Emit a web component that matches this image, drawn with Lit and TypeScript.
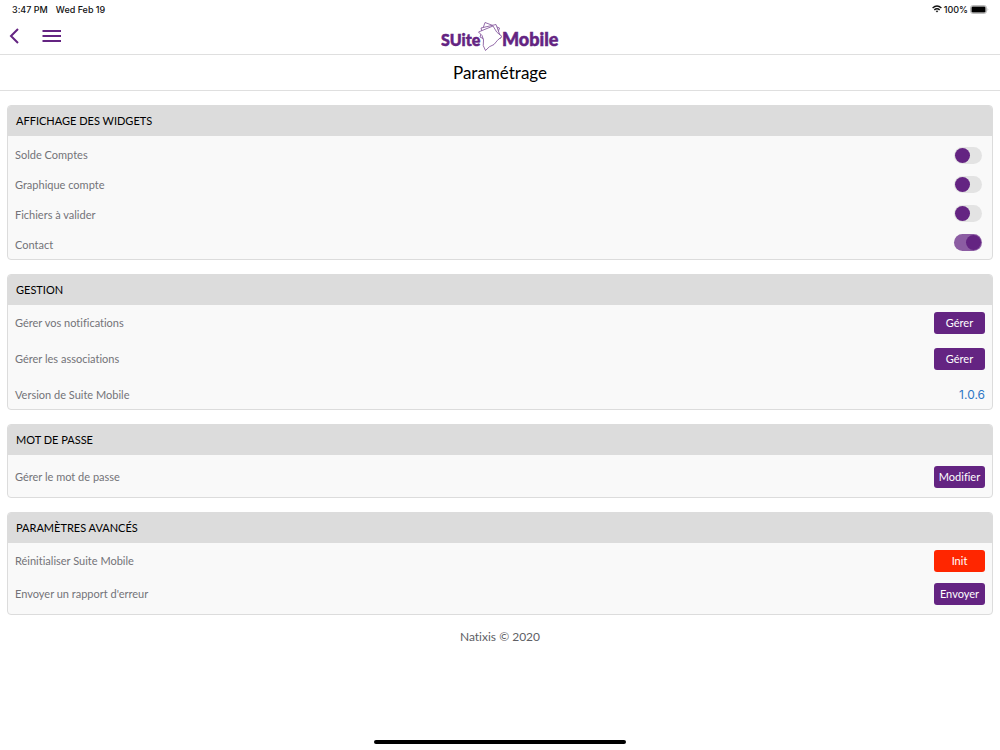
import { LitElement, html, css, svg } from "lit";
import { customElement, property, state } from "lit/decorators.js";

@customElement("settings-panel")
class SettingsPanel extends LitElement {
  @property() heading = "";

  static styles = css`
    :host {
      display: block;
      border: 1px solid #dcdcdc;
      border-radius: 4px;
      background: #f9f9f9;
      overflow: hidden;
    }
    .heading {
      margin: 0;
      padding: 0 8px;
      background: #dcdcdc;
      color: #000;
      font-size: 11px;
      font-weight: 400;
      line-height: 30px;
    }
  `;

  render() {
    return html`
      <h2 class="heading">${this.heading}</h2>
      <slot></slot>
    `;
  }
}

@customElement("app-root")
class AppRoot extends LitElement {
  @state() private widgets = [
    { id: "solde", label: "Solde Comptes", on: false },
    { id: "graphique", label: "Graphique compte", on: false },
    { id: "fichiers", label: "Fichiers à valider", on: false },
    { id: "contact", label: "Contact", on: true },
  ];

  static styles = css`
    :host {
      display: flex;
      flex-direction: column;
      min-height: 100vh;
      background: #fff;
      color: #737378;
      font-family: "Gill Sans", "Lato", sans-serif;
      font-size: 11px;
      font-variant-ligatures: none;
    }
    .status {
      display: flex;
      justify-content: space-between;
      align-items: center;
      height: 18px;
      padding: 0 11px 0 12px;
      color: #111;
      font-family: "Inter", sans-serif;
      font-size: 9px;
      font-weight: 500;
    }
    .status-group {
      display: flex;
      align-items: center;
      gap: 8px;
    }
    .signals {
      gap: 2px;
    }
    .bar {
      display: grid;
      grid-template-columns: 1fr auto 1fr;
      align-items: center;
      height: 36px;
      border-bottom: 1px solid #dfdfdf;
    }
    .nav {
      display: flex;
      gap: 20px;
      padding-left: 8px;
    }
    .icon-button {
      display: block;
      padding: 0;
      border: 0;
      background: none;
      cursor: pointer;
    }
    .icon-button svg,
    .logo,
    .signals svg {
      display: block;
    }
    .logo-text {
      font-family: "Lato", sans-serif;
      font-weight: 900;
      fill: #642482;
      stroke: #642482;
      stroke-width: 0.5px;
    }
    .title {
      margin: 0;
      border-bottom: 1px solid #dfdfdf;
      color: #000;
      font-size: 17px;
      font-weight: 400;
      line-height: 35px;
      text-align: center;
    }
    .panels {
      display: grid;
      gap: 14px;
      padding: 14px 7px 0;
    }
    .widgets {
      display: flex;
      justify-content: space-between;
      padding: 3px 10px 0 7px;
    }
    .labels {
      display: grid;
      grid-auto-rows: 30px;
      align-items: center;
    }
    .switches {
      display: grid;
      grid-auto-rows: 29px;
      align-items: center;
      align-content: center;
    }
    .switch {
      appearance: none;
      display: grid;
      align-items: center;
      box-sizing: border-box;
      width: 28px;
      height: 17px;
      margin: 0;
      padding: 0 1px;
      border-radius: 9px;
      background: #e3e3e3;
      cursor: pointer;
    }
    .switch::before {
      content: "";
      width: 15px;
      height: 15px;
      border-radius: 50%;
      background: #642482;
    }
    .switch:checked {
      background: #8c5da3;
      justify-items: end;
    }
    .rows {
      display: grid;
      padding: 7px 7px 3px;
      gap: 14px;
    }
    .rows.single {
      padding: 11px 7px 9px;
    }
    .rows.tight {
      padding: 7px 7px 9px;
      gap: 11px;
    }
    .row {
      display: flex;
      justify-content: space-between;
      align-items: center;
      height: 22px;
    }
    .row span {
      padding-bottom: 2px;
    }
    .button {
      width: 51px;
      height: 22px;
      padding: 0 0 2px;
      border: 0;
      border-radius: 3px;
      background: #642482;
      color: #fff;
      font: inherit;
      cursor: pointer;
    }
    .button.danger {
      background: #ff2600;
    }
    .version {
      color: #2d77c5;
      font-family: "Inter", sans-serif;
      font-size: 12px;
    }
    .footer {
      padding-top: 14px;
      color: #606065;
      font-size: 12px;
      line-height: 16px;
      text-align: center;
    }
    .home {
      width: 25.2%;
      height: 4px;
      margin: auto auto 6px;
      border-radius: 2px;
      background: #000;
    }
  `;

  private toggle(id: string) {
    this.widgets = this.widgets.map((w) => (w.id === id ? { ...w, on: !w.on } : w));
  }

  private actionRow(id: string, label: string, action: string, kind = "") {
    return html`
      <div class="row">
        <span id=${id}>${label}</span>
        <button class="button ${kind}" aria-describedby=${id}>${action}</button>
      </div>
    `;
  }

  private logoCards() {
    return svg`
      <g fill="#fff" stroke="#7b4a95" stroke-width="0.8" stroke-linejoin="round">
        <path d="M44 2.5 L58.5 8 L53 24 L39 17 Z" />
        <path d="M40 8 L55 4.5 L60 18 L44 23 Z" />
        <path d="M37.5 12 L52 6 Q55 13 61 16.5 Q56 20 53 24.5 Q48 26 44.5 30.5 Q41 26 42.5 20 Q42 15 37.5 12 Z" />
      </g>
    `;
  }

  render() {
    return html`
      <div class="status">
        <div class="status-group"><span>3:47 PM</span><span>Wed Feb 19</span></div>
        <div class="status-group signals">
          <svg width="10" height="8" viewBox="0 0 10 8" fill="none" stroke="#111" stroke-width="1.4" aria-hidden="true">
            <path d="M0.6 3 Q5 -1 9.4 3" />
            <path d="M2.3 4.9 Q5 2.6 7.7 4.9" />
            <path d="M3.7 6 Q5 5 6.3 6 L5 7.5 Z" fill="#111" stroke="none" />
          </svg>
          <span>100%</span>
          <svg width="19" height="9" viewBox="0 0 19 9" aria-hidden="true">
            <rect x="0.5" y="0.5" width="16" height="8" rx="2.4" fill="#fff" stroke="#bbb" />
            <rect x="1.5" y="1.5" width="14" height="6" rx="1.3" fill="#000" />
            <path d="M17.6 3 Q19 4.5 17.6 6 Z" fill="#aaa" />
          </svg>
        </div>
      </div>
      <header class="bar">
        <nav class="nav">
          <button class="icon-button" aria-label="Retour">
            <svg width="14" height="18" viewBox="0 0 14 18" fill="none" stroke="#642482" stroke-width="2">
              <path d="M10 2 L3 9 L10 16" />
            </svg>
          </button>
          <button class="icon-button" aria-label="Menu">
            <svg width="20" height="18" viewBox="0 0 20 18" stroke="#642482" stroke-width="2">
              <path d="M0.5 4 H19 M0.5 9 H19 M0.5 14 H19" />
            </svg>
          </button>
        </nav>
        <svg class="logo" width="118" height="32" viewBox="0 0 118 32" role="img" aria-label="Suite Mobile">
          ${this.logoCards()}
          <text class="logo-text" x="0" y="26" font-size="16">SUite</text>
          <text class="logo-text" x="61" y="26" font-size="18">Mobile</text>
        </svg>
      </header>
      <h1 class="title">Paramétrage</h1>
      <main class="panels">
        <settings-panel heading="AFFICHAGE DES WIDGETS">
          <div class="widgets">
            <div class="labels">
              ${this.widgets.map((w) => html`<label for=${w.id}>${w.label}</label>`)}
            </div>
            <div class="switches">
              ${this.widgets.map(
                (w) => html`<input
                  class="switch"
                  type="checkbox"
                  id=${w.id}
                  .checked=${w.on}
                  @change=${() => this.toggle(w.id)}
                />`
              )}
            </div>
          </div>
        </settings-panel>
        <settings-panel heading="GESTION">
          <div class="rows">
            ${this.actionRow("notifications", "Gérer vos notifications", "Gérer")}
            ${this.actionRow("associations", "Gérer les associations", "Gérer")}
            <div class="row">
              <span>Version de Suite Mobile</span>
              <span class="version">1.0.6</span>
            </div>
          </div>
        </settings-panel>
        <settings-panel heading="MOT DE PASSE">
          <div class="rows single">
            ${this.actionRow("passe", "Gérer le mot de passe", "Modifier")}
          </div>
        </settings-panel>
        <settings-panel heading="PARAMÈTRES AVANCÉS">
          <div class="rows tight">
            ${this.actionRow("init", "Réinitialiser Suite Mobile", "Init", "danger")}
            ${this.actionRow("rapport", "Envoyer un rapport d'erreur", "Envoyer")}
          </div>
        </settings-panel>
      </main>
      <footer class="footer">Natixis © 2020</footer>
      <div class="home"></div>
    `;
  }
}
